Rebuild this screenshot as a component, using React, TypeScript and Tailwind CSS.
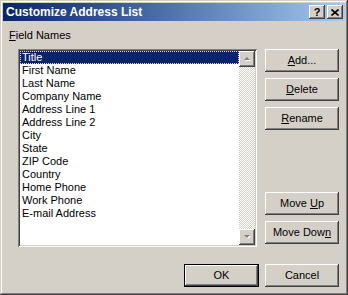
import React from "react";

const items = [
  "Title",
  "First Name",
  "Last Name",
  "Company Name",
  "Address Line 1",
  "Address Line 2",
  "City",
  "State",
  "ZIP Code",
  "Country",
  "Home Phone",
  "Work Phone",
  "E-mail Address",
];

const raised =
  "shadow-[inset_-1px_-1px_#404040,inset_1px_1px_#ffffff,inset_-2px_-2px_#808080,inset_2px_2px_#d4d0c8]";

function Btn({ children, className = "" }: { children: React.ReactNode; className?: string }) {
  return (
    <div
      className={`w-[74px] h-[23px] bg-[#d4d0c8] flex items-center justify-center text-[11px] text-black ${raised} ${className}`}
    >
      <span className="whitespace-pre">{children}</span>
    </div>
  );
}

function Arrow({ up }: { up: boolean }) {
  return (
    <div className={`w-[16px] h-[16px] bg-[#d4d0c8] flex items-center justify-center ${raised}`}>
      <svg width="9" height="6" viewBox="0 0 9 6">
        {up ? (
          <>
            <polygon points="2,5 5,2 8,5" fill="#ffffff" />
            <polygon points="1,4 4,1 7,4" fill="#808080" />
          </>
        ) : (
          <>
            <polygon points="2,2 8,2 5,5" fill="#ffffff" />
            <polygon points="1,1 7,1 4,4" fill="#808080" />
          </>
        )}
      </svg>
    </div>
  );
}

export default function App() {
  return (
    <div
      className="w-[348px] h-[295px] bg-[#d4d0c8] p-[3px] flex flex-col shadow-[inset_-1px_-1px_#404040,inset_1px_1px_#d4d0c8,inset_-2px_-2px_#808080,inset_2px_2px_#ffffff]"
      style={{ fontFamily: '"Liberation Sans", Arial, sans-serif' }}
    >
      <div className="h-[18px] flex items-center bg-gradient-to-r from-[#0a246a] to-[#a6caf0] pl-[3px] pr-[2px]">
        <span className="text-white font-bold text-[12px] leading-none">Customize Address List</span>
        <div className="ml-auto flex gap-[2px]">
          <div className={`w-[16px] h-[14px] bg-[#d4d0c8] flex items-center justify-center text-[11px] font-bold leading-none text-black ${raised}`}>
            ?
          </div>
          <div className={`w-[16px] h-[14px] bg-[#d4d0c8] flex items-center justify-center ${raised}`}>
            <svg width="8" height="7" viewBox="0 0 8 7">
              <path d="M0.5 0.5 L7.5 6.5 M7.5 0.5 L0.5 6.5" stroke="#000" strokeWidth="1.6" />
            </svg>
          </div>
        </div>
      </div>

      <div className="flex-1 flex flex-col pl-[6px] pt-[8px]">
        <div className="text-[11px] leading-[13px] text-black">
          <span className="underline">F</span>ield Names
        </div>
        <div className="flex mt-[7px]">
          <div className="ml-[9px] w-[239px] h-[198px] p-[2px] bg-white flex shadow-[inset_1px_1px_#808080,inset_-1px_-1px_#ffffff,inset_2px_2px_#404040,inset_-2px_-2px_#d4d0c8]">
            <div className="flex-1 flex flex-col">
              {items.map((it, i) =>
                i === 0 ? (
                  <div
                    key={it}
                    className="h-[13px] bg-[#0a246a] text-white text-[11px] leading-[11px] pl-[1px] border border-dotted border-[#f5db95]"
                  >
                    {it}
                  </div>
                ) : (
                  <div key={it} className="h-[13px] text-black text-[11px] leading-[13px] pl-[2px]">
                    {it}
                  </div>
                )
              )}
            </div>
            <div className="w-[16px] flex flex-col bg-[repeating-conic-gradient(#d4d0c8_0_25%,#ffffff_0_50%)] bg-[length:2px_2px]">
              <Arrow up={true} />
              <div className="flex-1" />
              <Arrow up={false} />
            </div>
          </div>
          <div className="ml-[8px] flex flex-col">
            <div className="flex flex-col gap-[6px]">
              <Btn>
                <span className="underline">A</span>dd...
              </Btn>
              <Btn>
                <span className="underline">D</span>elete
              </Btn>
              <Btn>
                <span className="underline">R</span>ename
              </Btn>
            </div>
            <div className="flex flex-col gap-[6px] mt-[62px]">
              <Btn>
                {"Move "}
                <span className="underline">U</span>p
              </Btn>
              <Btn>
                Move Dow<span className="underline">n</span>
              </Btn>
            </div>
          </div>
        </div>
        <div className="flex justify-end gap-[6px] mt-[17px] pr-[6px]">
          <div className="w-[75px] h-[23px] border border-black">
            <div className={`w-full h-full bg-[#d4d0c8] flex items-center justify-center text-[11px] text-black ${raised}`}>
              OK
            </div>
          </div>
          <Btn>Cancel</Btn>
        </div>
      </div>
    </div>
  );
}
